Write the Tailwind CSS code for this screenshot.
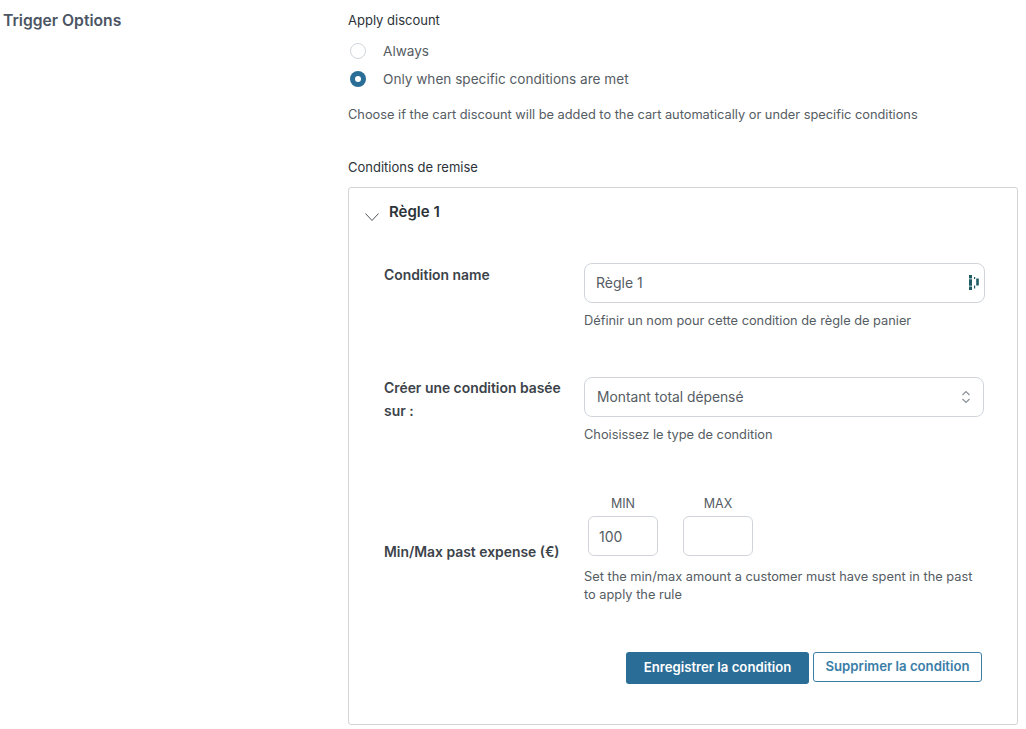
<!DOCTYPE html>
<html lang="en">
<head>
    <meta charset="UTF-8">
    <title>Trigger Options</title>
    <script src="https://cdn.jsdelivr.net/npm/@tailwindcss/browser@4"></script>
</head>
<body class="bg-white h-[729px] overflow-hidden font-['Inter',sans-serif] text-[#555c63]">
    <div class="flex pl-[3px] pt-[11px]">
        <h2 class="w-[345px] shrink-0 pt-[1px] text-[15.7px] leading-[18px] font-semibold text-[#4b5563]">Trigger Options</h2>
        <div class="w-[670px]">
            <p class="text-[13px] leading-[18px] text-[#2c3338]">Apply discount</p>
            <div class="mt-[12px] flex flex-col gap-[8px]">
                <label class="flex items-center h-[20px] text-[13.6px]">
                    <span class="w-[16px] h-[16px] ml-[2px] rounded-full border border-[#d1d5db] bg-white"></span>
                    <span class="ml-[17px]">Always</span>
                </label>
                <label class="flex items-center h-[20px] text-[13.6px]">
                    <span class="w-[16px] h-[16px] ml-[2px] rounded-full bg-[#2a6d96] flex items-center justify-center"><span class="w-[6px] h-[6px] rounded-full bg-white"></span></span>
                    <span class="ml-[17px]">Only when specific conditions are met</span>
                </label>
            </div>
            <p class="mt-[17px] text-[12.8px] leading-[18px]">Choose if the cart discount will be added to the cart automatically or under specific conditions</p>
            <p class="mt-[34px] text-[13px] leading-[18px] text-[#2c3338]">Conditions de remise</p>
            <div class="mt-[11px] h-[538px] border border-[#d4d4d4] rounded-[3px] pl-[15px] pr-[32px]">
                <div class="flex items-center pt-[3px] h-[46px]">
                    <svg class="w-[16px] h-[10px] mt-[8px]" viewBox="0 0 16 10" fill="none" stroke="#50575e" stroke-width="1"><path d="M1.5 1.5 8 8.5l6.5-7"/></svg>
                    <span class="ml-[9px] text-[15px] font-semibold text-[#2c3338]">Règle 1</span>
                </div>
                <div class="flex mt-[29px] pl-[20px]">
                    <div class="w-[200px] shrink-0 pt-[1px] text-[13.9px] leading-[23px] font-semibold text-[#3c434a]">Condition name</div>
                    <div class="flex-1">
                        <div class="h-[40px] w-[401px] border border-[#d1d5db] rounded-[8px] flex items-center justify-between pl-[11px] pr-[4px] pb-[1px] text-[14px]">
                            <span>Règle 1</span>
                            <svg class="w-[12px] h-[15px]" viewBox="0 0 12 15" fill="#1f5c63"><path d="M1 0h3v3.500H1zM1 4.200h3v6.600H1zM1 11.500h3V15H1zM6 2h1.200v2H6zM8.200 3.500h2.600v7H8.200zM6 10.500h1.200v3H6z"/></svg>
                        </div>
                        <p class="mt-[9px] text-[12.8px] leading-[18px]">Définir un nom pour cette condition de règle de panier</p>
                    </div>
                </div>
                <div class="flex mt-[47px] pl-[20px]">
                    <div class="w-[200px] shrink-0 pr-[15px] text-[13.9px] leading-[23px] font-semibold text-[#3c434a]">Créer une condition basée sur :</div>
                    <div class="flex-1">
                        <div class="h-[40px] w-[400px] border border-[#d1d5db] rounded-[8px] flex items-center justify-between pl-[12px] pr-[12px] text-[13.8px]">
                            <span>Montant total dépensé</span>
                            <svg class="w-[10px] h-[14px]" viewBox="0 0 10 14" fill="none" stroke="#8a9099" stroke-width="1.200"><path d="M1.500 5 5 1.500 8.500 5M1.500 9 5 12.500 8.500 9"/></svg>
                        </div>
                        <p class="mt-[9px] text-[12.8px] leading-[18px]">Choisissez le type de condition</p>
                    </div>
                </div>
                <div class="flex mt-[51px] pl-[20px]">
                    <div class="w-[200px] shrink-0 pt-[46px] text-[13.9px] leading-[23px] font-semibold text-[#3c434a]">Min/Max past expense (€)</div>
                    <div class="flex-1">
                        <div class="flex gap-[25px] pl-[4px]">
                            <div class="w-[70px] text-center">
                                <div class="text-[12.5px] leading-[18px]">MIN</div>
                                <div class="mt-[3px] h-[40px] border border-[#d1d5db] rounded-[6px] flex items-center pl-[10px] text-[14px] text-left">100</div>
                            </div>
                            <div class="w-[70px] text-center">
                                <div class="text-[12.5px] leading-[18px]">MAX</div>
                                <div class="mt-[3px] h-[40px] border border-[#d1d5db] rounded-[6px]"></div>
                            </div>
                        </div>
                        <p class="mt-[12px] w-[400px] text-[12.8px] leading-[18px]">Set the min/max amount a customer must have spent in the past to apply the rule</p>
                    </div>
                </div>
                <div class="flex justify-end items-start gap-[4px] mt-[48px] pr-[3px]">
                    <button class="h-[32px] w-[183px] rounded-[3px] bg-[#2a6d96] text-white text-[13.2px] font-semibold">Enregistrer la condition</button>
                    <button class="h-[30px] w-[169px] rounded-[3px] border border-[#3a7ea8] bg-white text-[#3a7ea8] text-[13.2px] font-semibold">Supprimer la condition</button>
                </div>
            </div>
        </div>
    </div>
</body>
</html>
